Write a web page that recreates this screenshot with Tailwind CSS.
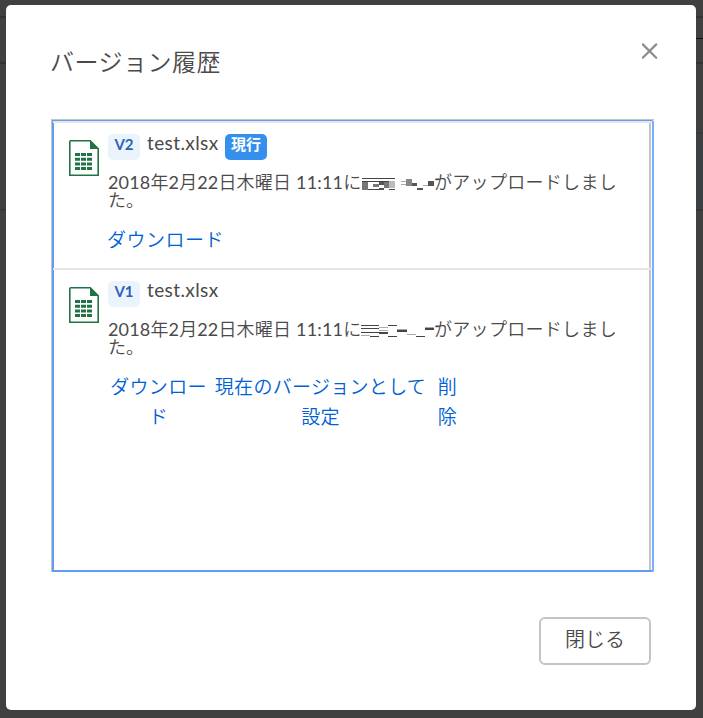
<!DOCTYPE html>
<html lang="ja">
<head>
<meta charset="utf-8">
<title>バージョン履歴</title>
<script src="https://cdn.jsdelivr.net/npm/@tailwindcss/browser@4"></script>
</head>
<body class="w-[703px] h-[718px] overflow-hidden bg-[#404040] relative font-['Lato','Noto_Sans_CJK_JP',sans-serif] text-[#4a4a4a]">
<div class="absolute inset-0">
  <div class="absolute top-4 w-full h-[2px] bg-[#333]"></div>
  <div class="absolute top-[38px] right-0 w-2 h-px bg-[#111]"></div>
  <div class="absolute top-[62px] w-full h-[2px] bg-[#333]"></div>
  <div class="absolute top-[132px] right-0 w-2 h-[78px] bg-[#3d4042] border-t-2 border-[#3a3a3a]"></div>
  <div class="absolute top-[209px] w-full h-[2px] bg-[#343838]"></div>
</div>
<svg class="hidden">
  <symbol id="sheet" viewBox="0 0 30 36">
    <path d="M1.8 .8H21.2L29.2 8.8V35.2H.8V1.8Q.8 .8 1.8 .8Z" fill="#fff" stroke="#217346" stroke-width="1.6"/>
    <path d="M21 0L30 9H21Z" fill="#217346"/>
    <path d="M6 13h5v3H6zM12 13h5v3h-5zM18 13h5v3h-5zM6 17.7h5v3H6zM12 17.7h5v3h-5zM18 17.7h5v3h-5zM6 22.4h5v3H6zM12 22.4h5v3h-5zM18 22.4h5v3h-5zM6 27h5v3H6zM12 27h5v3h-5zM18 27h5v3h-5z" fill="#217346"/>
  </symbol>
</svg>
<main class="relative mt-[5px] ml-[6px] w-[690px] h-[705px] rounded-[5px] bg-white flex flex-col">
  <header class="flex justify-between h-[114px] pl-[44px] pr-[38px]">
    <h1 class="mt-[39px] text-[24px] leading-[36px] tracking-[0.5px] font-[350]">バージョン履歴</h1>
    <button class="mt-[38px] h-4 w-4"><svg width="16" height="16" viewBox="0 0 16 16"><path d="M.8 1.4L14.2 14.8M14.2 1.4L.8 14.8" stroke="#8c8c8c" stroke-width="2.2" stroke-linecap="round"/></svg></button>
  </header>
  <section class="ml-[45px] w-[603px] h-[453px] border-l border-t border-[#bfc5c9]">
    <div class="h-[452px] w-[602px] border-t border-l-2 border-r-2 border-b-2 border-t-[#649cf2] border-l-[#649cf2] border-r-[#7aacff] border-b-[#649cf2] rounded-r-[2px] pr-px">
      <div class="h-full border-r-2 border-[#bfc5c9]">
        <article class="-ml-px -mr-[3px] h-[147px] border-t-2 border-[#e6e6e6] flex pl-4">
          <svg class="mt-[17px] w-[30px] h-9 shrink-0"><use href="#sheet"/></svg>
          <div class="ml-[9px] pt-[11px] grow">
            <div class="flex h-[26px]">
              <span class="w-8 h-[26px] rounded-[5px] bg-[#ebf4fc] text-[#2e62b5] text-[15px] font-bold text-center leading-[20px]">V2</span>
              <span class="ml-[7px] w-[72px] text-[19px] leading-[18px] tracking-[0.4px] whitespace-nowrap">test.xlsx</span>
              <span class="ml-[6px] w-[42px] h-[26px] rounded-[5px] bg-[#3490ec] text-white text-[15px] font-bold text-center leading-[20px]">現行</span>
            </div>
            <p class="mt-[13px] text-[18px] leading-[18px] whitespace-nowrap font-[350]"><span class="inline-block w-[253px] tracking-[0.15px]"><span class="font-normal">2018</span>年<span class="font-normal">2</span>月<span class="font-normal">22</span>日木曜日 <span class="font-normal">11:11</span>に</span><svg class="inline-block align-[-2px]" width="73" height="14" viewBox="0 0 73 14" shape-rendering="crispEdges"><path d="M1 1h33v1H1zM1 4h33v1H1zM1 12h17v1H1zM28 12h6v1h-6z" fill="#444"/><path d="M1 5h6v8H1zM12 7h6v3h-6zM23 5h5v6h-5z" fill="#777"/><path d="M28 4h6v7h-6z" fill="#bbb"/><path d="M18 5h5v3h-5zM18 11h5v2h-5zM45 4h6v2h-6zM50 6h6v3h-6zM56 11h6v2h-6zM67 4h6v5h-6z" fill="#555"/><path d="M40 4h5v1h-5zM40 7h5v1h-5zM62 8h5v1h-5z" fill="#aaa"/><path d="M45 2h6v7h-6z" fill="#888"/></svg><span class="tracking-[0.3px]">がアップロードしまし</span><br>た。</p>
            <a class="-ml-px block mt-[16px] text-[19px] leading-[30px] tracking-[0.5px] text-[#0061d5] font-[350]">ダウンロード</a>
          </div>
        </article>
        <article class="-ml-px -mr-[3px] border-t-2 border-[#e6e6e6] flex pl-4">
          <svg class="mt-[17px] w-[30px] h-9 shrink-0"><use href="#sheet"/></svg>
          <div class="ml-[9px] pt-[11px] grow">
            <div class="flex h-[26px]">
              <span class="w-8 h-[26px] rounded-[5px] bg-[#ebf4fc] text-[#2e62b5] text-[15px] font-bold text-center leading-[20px]">V1</span>
              <span class="ml-[7px] text-[19px] leading-[18px] tracking-[0.4px]">test.xlsx</span>
            </div>
            <p class="mt-[13px] text-[18px] leading-[18px] whitespace-nowrap font-[350]"><span class="inline-block w-[253px] tracking-[0.15px]"><span class="font-normal">2018</span>年<span class="font-normal">2</span>月<span class="font-normal">22</span>日木曜日 <span class="font-normal">11:11</span>に</span><svg class="inline-block align-[-2px]" width="73" height="14" viewBox="0 0 73 14" shape-rendering="crispEdges"><path d="M0 1h18v1H0zM0 4h18v1H0zM0 8h18v1H0zM9 12h9v1H9zM27 1h9v1h-9zM18 8h9v2h-9zM27 12h9v1h-9zM36 6h10v2H36zM55 12h9v1h-9zM64 4h9v2h-9z" fill="#444"/><path d="M0 11h9v1H0zM18 3h9v1h-9zM18 6h9v1h-9zM36 5h10v1H36zM46 10h9v1h-9zM64 3h9v1h-9z" fill="#aaa"/></svg><span class="tracking-[0.3px]">がアップロードしまし</span><br>た。</p>
            <div class="flex mt-[16px] text-[19px] leading-[30px] tracking-[0.3px] text-[#0061d5] font-[350] text-center">
              <a class="w-[101px]">ダウンロー<br>ド</a>
              <a class="ml-[5px] w-[213px]">現在のバージョンとして<br>設定</a>
              <a class="ml-[10px] w-[21px]">削<br>除</a>
            </div>
          </div>
        </article>
      </div>
    </div>
  </section>
  <footer class="mt-[45px] pr-[45px] flex justify-end">
    <button class="w-[112px] h-12 rounded-[6px] border-2 border-[#bfc5c9] text-[20px] leading-[40px] pb-1 font-[350]">閉じる</button>
  </footer>
</main>
</body>
</html>
